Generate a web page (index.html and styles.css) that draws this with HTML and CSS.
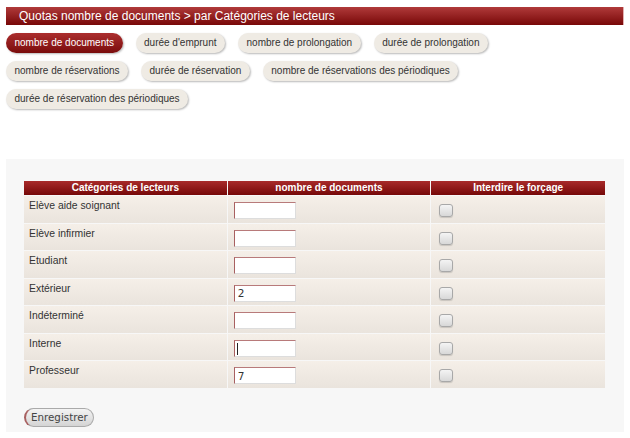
FILE: index.html
```html
<!DOCTYPE html>
<html lang="fr">
<head>
<meta charset="utf-8">
<title>Quotas</title>
<link rel="stylesheet" href="styles.css">
</head>
<body>
<div class="titlebar">Quotas nombre de documents &gt; par Catégories de lecteurs</div>
<div class="tabs">
  <span class="tab active">nombre de documents</span>
  <span class="tab">durée d'emprunt</span>
  <span class="tab">nombre de prolongation</span>
  <span class="tab">durée de prolongation</span>
  <span class="tab">nombre de réservations</span>
  <span class="tab">durée de réservation</span>
  <span class="tab">nombre de réservations des périodiques</span>
  <span class="tab">durée de réservation des périodiques</span>
</div>
<div class="panel">
  <table class="quota">
    <thead>
      <tr><th class="c1">Catégories de lecteurs</th><th class="c2">nombre de documents</th><th class="c3">Interdire le forçage</th></tr>
    </thead>
    <tbody>
      <tr><td>Elève aide soignant</td><td><input class="num" type="text" value=""></td><td><span class="chk"></span></td></tr>
      <tr><td>Elève infirmier</td><td><input class="num" type="text" value=""></td><td><span class="chk"></span></td></tr>
      <tr><td>Etudiant</td><td><input class="num" type="text" value=""></td><td><span class="chk"></span></td></tr>
      <tr><td>Extérieur</td><td><input class="num" type="text" value="2"></td><td><span class="chk"></span></td></tr>
      <tr><td>Indéterminé</td><td><input class="num" type="text" value=""></td><td><span class="chk"></span></td></tr>
      <tr><td>Interne</td><td><span class="num fake"><span class="caret"></span></span></td><td><span class="chk"></span></td></tr>
      <tr><td>Professeur</td><td><input class="num" type="text" value="7"></td><td><span class="chk"></span></td></tr>
    </tbody>
  </table>
  <button class="save" type="button">Enregistrer</button>
</div>
</body>
</html>
```
FILE: styles.css
```css
html, body {
  margin: 0;
  padding: 0;
  background: #ffffff;
}
body {
  padding: 7px 6px 0 6px;
  font-family: "Liberation Sans", Arial, sans-serif;
  color: #333;
}
.titlebar {
  height: 18px;
  line-height: 18px;
  padding-left: 13px;
  font-size: 12px;
  color: #fff;
  background: linear-gradient(to bottom, #b03a3a, #780808);
  border-right: 1px solid #e3b0b0;
}
.tabs {
  display: flex;
  flex-wrap: wrap;
  gap: 8px 13px;
  margin-top: 8px;
  padding-right: 24px;
}
.tab {
  display: inline-block;
  height: 20px;
  line-height: 20px;
  padding: 0 8.5px;
  border-radius: 10px;
  font-size: 10px;
  color: #333;
  background: #efebe4;
  box-shadow: 1px 1px 2px rgba(0,0,0,0.28);
  white-space: nowrap;
}
.tab.active {
  color: #fff;
  background: linear-gradient(to bottom, #ab2e2e, #7a0c0c);
}
.panel {
  margin-top: 50px;
  background: #f7f7f7;
  padding: 21px 17px 5px 18px;
}
.quota {
  width: 583px;
  border-collapse: separate;
  border-spacing: 1px;
  margin: 0 0 19px -1px;
  font-size: 10.4px;
}
.quota th {
  height: 14px;
  padding: 0;
  font-weight: bold;
  font-size: 10px;
  color: #fff;
  text-align: center;
  background: linear-gradient(to bottom, #a82a2a, #760808);
  line-height: 14px;
}
.c1, .c2 { width: 35%; }
.c3 { width: 30%; }
.quota td {
  height: 26.5px;
  box-sizing: border-box;
  vertical-align: top;
  padding: 3px 5px 0 5px;
  background: linear-gradient(to bottom, #f5efe8, #eae4dd);
  color: #333;
  line-height: 13px;
}
.num {
  display: block;
  box-sizing: border-box;
  width: 62px;
  height: 17px;
  margin: 3px 0 0 1px;
  padding: 0 3px;
  border: 1px solid #ddd;
  border-top-color: #b87a7a;
  border-left-color: #a86060;
  background: #fff;
  font-family: "DejaVu Sans", sans-serif;
  font-size: 10.5px;
  color: #333;
  outline: none;
}
.fake {
  position: relative;
}
.caret {
  position: absolute;
  left: 2px;
  top: 2px;
  width: 1px;
  height: 12px;
  background: #222;
}
.chk {
  display: block;
  width: 12px;
  height: 11px;
  margin: 5px 0 0 3px;
  border: 1px solid #a8a8a8;
  border-radius: 3px;
  background: linear-gradient(to bottom, #f4f4f4, #d8d8d8);
  box-shadow: 0 1px 1px rgba(0,0,0,0.15);
}
.save {
  display: block;
  height: 19px;
  padding: 0 5px;
  border: 1px solid #aaa;
  border-left: 2px solid #a86060;
  border-radius: 10px;
  background: linear-gradient(to bottom, #f4f4f4, #d4d4d4);
  font-family: "DejaVu Sans", sans-serif;
  font-size: 10.3px;
  color: #444;
  line-height: 17px;
}
```
